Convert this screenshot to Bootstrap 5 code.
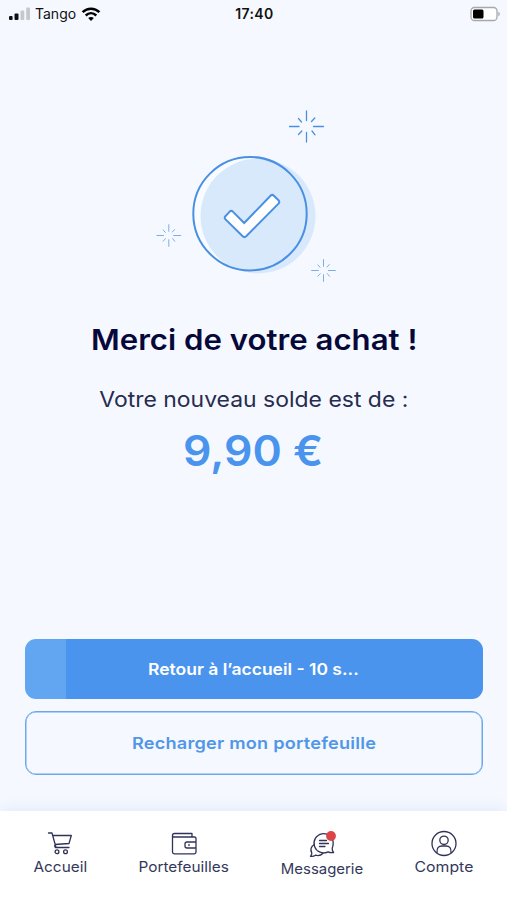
<!DOCTYPE html>
<html lang="fr">
<head>
<meta charset="utf-8">
<meta name="viewport" content="width=device-width, initial-scale=1">
<title>Merci de votre achat</title>
<link rel="stylesheet" href="https://cdn.jsdelivr.net/npm/bootstrap@5.3.0/dist/css/bootstrap.min.css">
<style>
body{background:#f5f9ff;font-family:Inter,"Open Sans",sans-serif;color:#282c50;height:900px;overflow:hidden}
svg{display:block;flex:none}
.status{height:27px;padding:0 6px 0 8px;color:#111;font-size:14px}
.status>div{flex:1 1 0}
.carrier{margin:0 5px 0 3px}
.hour{font-weight:600;letter-spacing:.35px}
.art{margin:73px 0 0 145px}
/* Widened letterforms */
.wide{display:inline-block;white-space:nowrap;transform:scaleX(1.06)}
.title{font-size:28.5px;font-weight:600;line-height:36px;margin:32px 0 0 1px;color:#06083a}
.title .wide{transform:scaleX(1.094)}
.sub{font-size:21.5px;line-height:30px;margin:26px 0 0}
.sub .wide{transform:scaleX(1.067)}
.price{font-size:42px;font-weight:600;line-height:50px;margin:12px 0 0;color:#4a94ee}
.actions{padding:0 24.5px 36px 25px;gap:12px}
.act{border-radius:11px;font-size:16.5px;font-weight:600;padding:0}
.act-main,.act-main:hover{height:60px;color:#fff;border:0;background:linear-gradient(90deg,#62a6f2 41px,#4a94ee 41px)}
.act-line,.act-line:hover{height:64px;color:#5196e8;border:1px solid #6ba8e9;box-shadow:inset 0 0 0 .5px #6ba8e9}
.act-line .wide{transform:scaleX(1.1);letter-spacing:.2px}
.tabs{height:89px;background:#fff;padding:19px 33px 0;box-shadow:0 -3px 14px rgba(60,90,190,.09);font-size:14.5px;line-height:20px}
.tab{color:#34385c;text-decoration:none}
.tab svg{fill:none;stroke:#303358;stroke-width:1.3;stroke-linecap:round;stroke-linejoin:round}
.t1{width:54px}.t2{width:92px}.t3{width:83px}.t4{width:60px}
.t3 .wide{transform:scaleX(1.03)}
.t4 .wide{transform:scaleX(1.09)}
</style>
</head>
<body class="d-flex flex-column">
<header class="status d-flex align-items-center">
  <div class="d-flex align-items-center">
    <svg width="24" height="16" viewBox="0 0 24 16"><rect x="1" y="10" width="3.6" height="4" rx="1" fill="#111"/><rect x="6.5" y="7.5" width="4" height="6.5" rx="1" fill="#111"/><rect x="12.5" y="4.500" width="3.8" height="9.500" rx="1" fill="#c5c9ce"/><rect x="18.2" y="1.500" width="3.8" height="12.500" rx="1" fill="#c5c9ce"/></svg>
    <span class="carrier">Tango</span>
    <svg width="20" height="16" viewBox="0 0 20 16" fill="none" stroke="#000" stroke-width="2.500"><path d="M1.6 6.200C6.400 1.500 13.600 1.500 18.400 6.200M4.700 9.500C7.800 6.600 12.200 6.600 15.300 9.500"/><path d="M10 15l-2.800-3c1.600-1.500 4-1.500 5.600 0z" fill="#000" stroke="none"/></svg>
  </div>
  <div class="hour text-center">17:40</div>
  <div class="d-flex justify-content-end"><svg width="31" height="16" viewBox="0 0 31 16"><rect x="1" y="1.500" width="26" height="13" rx="3.500" fill="#fff" stroke="#a5a8ac" stroke-width="1.300"/><rect x="3" y="3.500" width="10.500" height="9" rx="1.500" fill="#000"/><path d="M28.300 5.500q3 2.500 0 5z" fill="#a5a8ac"/></svg></div>
</header>
<main class="flex-grow-1 d-flex flex-column text-center">
  <svg class="art" width="200" height="190" viewBox="145 100 200 190" fill="none" stroke="#4a90e2">
    <defs><g id="spark" stroke-linecap="round"><path d="M0-15.500V-6M0 6v9.500M-17 0h9.500M7 0h10M-8-8l3 3.500M8.300-8.500l-3.300 3.500M-8 8l3.300-3.500M8.500 8.300L5.500 4.500"/></g></defs>
    <circle cx="250" cy="214" r="56.500" fill="#f9fcff" stroke="none"/>
    <circle cx="258" cy="216" r="57.500" fill="#d8e9fb" stroke="none"/>
    <circle cx="250" cy="213.700" r="56.700" stroke-width="2"/>
    <path d="M225.300 219.200q-1.200-1.500.1-3l4.300-4.600q1.600-1.400 3.100 0l11.400 11.400 26.300-27.300q1.700-1.600 3.400 0l4.600 4.500q1.500 1.700 0 3.400l-32.300 32.700q-1.800 1.600-3.500 0z" fill="#fff" stroke-width="2"/>
    <use href="#spark" transform="translate(306.500 126.500)" stroke-width="1.300"/>
    <use href="#spark" transform="translate(168.800 235.500) scale(.7)" stroke-width="1.300" opacity=".8"/>
    <use href="#spark" transform="translate(323.500 270.500) scale(.7)" stroke-width="1.300" opacity=".8"/>
  </svg>
  <h1 class="title"><span class="wide">Merci de votre achat !</span></h1>
  <p class="sub"><span class="wide">Votre nouveau solde est de :</span></p>
  <p class="price"><span class="wide">9,90 €</span></p>
  <div class="actions d-grid mt-auto">
    <button class="btn act act-main" type="button"><span class="wide">Retour à l’accueil - 10 s...</span></button>
    <button class="btn act act-line" type="button"><span class="wide">Recharger mon portefeuille</span></button>
  </div>
</main>
<nav class="tabs d-flex justify-content-between align-items-start">
  <a class="tab t1 d-flex flex-column align-items-center" href="#"><svg width="26" height="27" viewBox="0 0 26 27"><path d="M1.500 3h3.500l4 14.500h13M5.800 5.500h18.500L22 13.500 8 14.500M8.500 17.500q-1.500-1.500 0-3"/><circle cx="10" cy="21.800" r="1.900"/><circle cx="18.500" cy="21.800" r="1.900"/></svg><span class="wide">Accueil</span></a>
  <a class="tab t2 d-flex flex-column align-items-center" href="#"><svg width="26" height="27" viewBox="0 0 26 27"><path d="M21 7V3.500H3.500q-2 0-2 2V22q0 1.800 1.800 1.800h20q1.700 0 1.700-1.800V8.500Q25 7 23.500 7H3q-1.500 0-1.500-1.500M25 12h-9q-2 0-2 2v2q0 2 2 2h9M18 14.500v1"/></svg><span class="wide">Portefeuilles</span></a>
  <a class="tab t3 d-flex flex-column align-items-center" href="#"><svg width="28" height="29" viewBox="0 0 28 29"><path d="M6.500 14.500C3 16.500 2.300 20 3.800 23q0 2-1.300 3.300 3 .4 5-1.100 4.500 1.300 7.500-2" /><path d="M25.200 13A9.600 9.600 0 1 0 20 21.800q2.500 1.300 5.600.7-1.600-1.800-1.400-4.200 1-2.300 1-5.300z" fill="#fff"/><path d="M11.500 10.500h7M11.500 13.500h9M11.500 16.500h5.500"/><circle cx="23" cy="6" r="4.900" fill="#dc4545" stroke="none"/></svg><span class="wide">Messagerie</span></a>
  <a class="tab t4 d-flex flex-column align-items-center" href="#"><svg width="26" height="27" viewBox="0 0 26 27"><circle cx="13" cy="13.500" r="12"/><circle cx="13" cy="10.300" r="4.200"/><path d="M6 22.500q-.5-6.500 5-6.500h4q5.500 0 5 6.500"/></svg><span class="wide">Compte</span></a>
</nav>
<script src="https://cdn.jsdelivr.net/npm/bootstrap@5.3.0/dist/js/bootstrap.bundle.min.js"></script>
</body>
</html>
